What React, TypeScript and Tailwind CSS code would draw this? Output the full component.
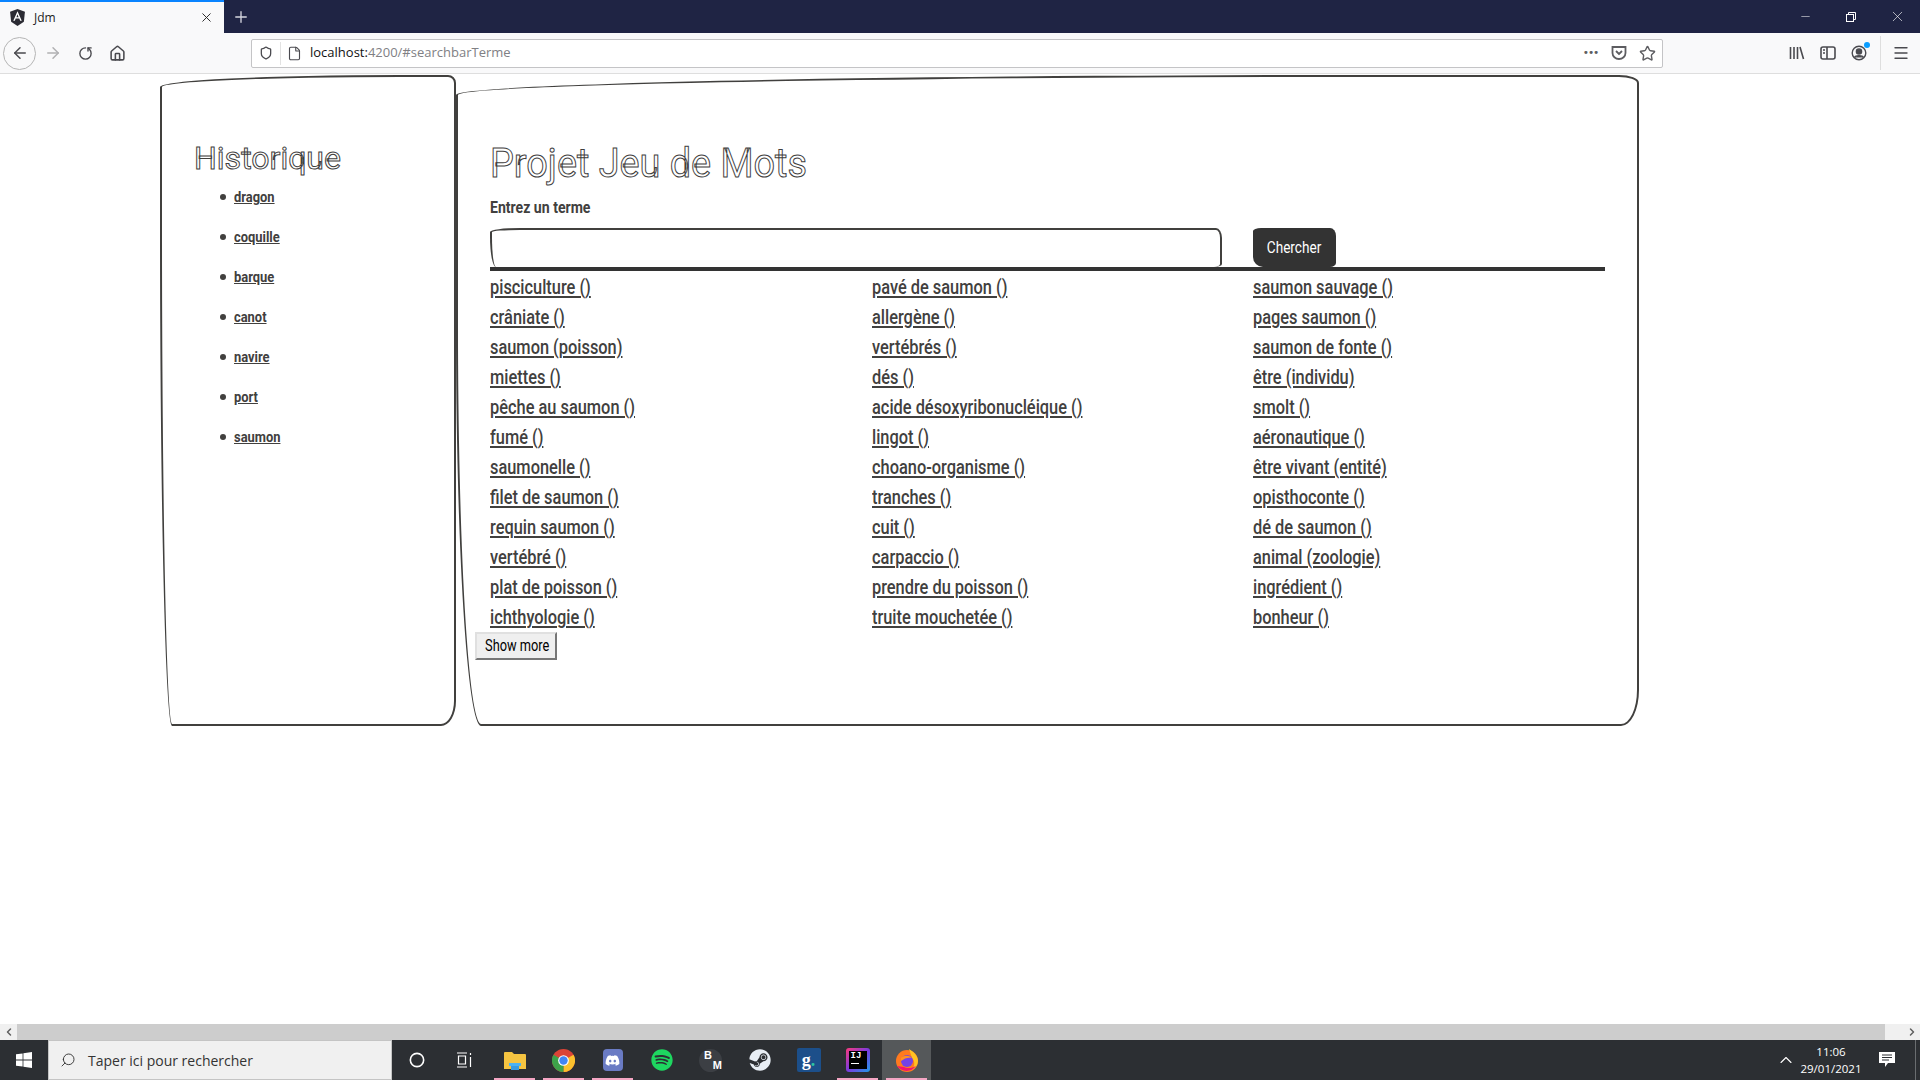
import { ArrowLeft, ArrowRight, RotateCw, Home, Shield, File, Star, X, Plus, Minus, Menu, ChevronUp, ChevronLeft, ChevronRight, Search, Circle } from "lucide-react";
import { FaDiscord, FaSpotify, FaSteam } from "react-icons/fa";

const history = ["dragon", "coquille", "barque", "canot", "navire", "port", "saumon"];

const terms = [
  "pisciculture ()", "pavé de saumon ()", "saumon sauvage ()",
  "crâniate ()", "allergène ()", "pages saumon ()",
  "saumon (poisson)", "vertébrés ()", "saumon de fonte ()",
  "miettes ()", "dés ()", "être (individu)",
  "pêche au saumon ()", "acide désoxyribonucléique ()", "smolt ()",
  "fumé ()", "lingot ()", "aéronautique ()",
  "saumonelle ()", "choano-organisme ()", "être vivant (entité)",
  "filet de saumon ()", "tranches ()", "opisthoconte ()",
  "requin saumon ()", "cuit ()", "dé de saumon ()",
  "vertébré ()", "carpaccio ()", "animal (zoologie)",
  "plat de poisson ()", "prendre du poisson ()", "ingrédient ()",
  "ichthyologie ()", "truite mouchetée ()", "bonheur ()",
];

function AngularIcon() {
  return (
    <svg width="17" height="17" viewBox="0 0 16 16">
      <path d="M8 0 1 2.5l1 9.5L8 16l6-4 1-9.5z" fill="#2b2b33" />
      <path d="M8 2 4 11h1.5l.8-2h3.4l.8 2H12zM7 7.7 8 5l1 2.7z" fill="#fff" />
    </svg>
  );
}

function TitleBar() {
  return (
    <div className="flex h-[33px] items-stretch bg-[#1f2444] text-white">
      <div className="flex w-[224px] items-center border-t-2 border-[#0a84ff] bg-[#f9f9fa] pl-[9px] pr-[10px] text-[#222]">
        <AngularIcon />
        <span className="ml-[8px] font-['Open_Sans',sans-serif] text-[12px]">Jdm</span>
        <X className="ml-auto" size={15} strokeWidth={1.5} />
      </div>
      <div className="flex w-[33px] items-center justify-center">
        <Plus size={18} strokeWidth={1.8} className="text-[#d5d6de]" />
      </div>
      <div className="ml-auto flex items-center">
        <div className="flex w-[46px] justify-center"><Minus size={13} strokeWidth={1} /></div>
        <div className="flex w-[46px] justify-center">
          <svg width="12" height="12" viewBox="0 0 12 12" fill="none" stroke="#fff">
            <rect x="1.5" y="3.5" width="7" height="7" />
            <path d="M3.5 3.5v-2h7v7h-2" />
          </svg>
        </div>
        <div className="flex w-[46px] justify-center"><X size={17} strokeWidth={0.9} /></div>
      </div>
    </div>
  );
}

function Toolbar() {
  return (
    <div className="flex h-[41px] items-center border-b border-[#dedede] bg-[#f9f9fa] text-[#4a4a4f]">
      <div className="ml-[3px] flex h-[33px] w-[33px] items-center justify-center rounded-full border border-[#b5b5b5]">
        <ArrowLeft size={18} strokeWidth={2} />
      </div>
      <ArrowRight size={18} strokeWidth={2} className="ml-[8px] text-[#b1b1b3]" />
      <RotateCw size={15} strokeWidth={2.2} className="ml-[16px] -scale-x-100 rotate-90" />
      <Home size={17} strokeWidth={2.2} className="ml-[16px]" />
      <div className="ml-[125px] flex h-[29px] w-[1412px] items-center rounded-[2px] border border-[#c4c4c6] bg-white">
        <Shield size={14} strokeWidth={2.2} className="ml-[7px]" />
        <div className="ml-[7px] h-[23px] w-px bg-[#e2e2e2]" />
        <File size={15} strokeWidth={1.8} className="ml-[6px]" />
        <span className="ml-[8px] font-['Open_Sans',sans-serif] text-[13px] text-[#808084]"><span className="text-[#111]">localhost:</span>4200/#searchbarTerme</span>
        <div className="ml-auto flex items-center text-[#5d5d61]">
          <span className="text-[13px] font-bold tracking-[0.5px]">•••</span>
          <svg width="16" height="16" viewBox="0 0 16 16" fill="none" stroke="currentColor" strokeWidth="1.8" className="ml-[12px]">
            <path d="M1.5 2h13v6a6.5 6 0 0 1-13 0z" />
            <path d="M5 6l3 3 3-3" />
          </svg>
          <Star size={17} strokeWidth={2} className="ml-[12px] mr-[6px]" />
        </div>
      </div>
      <div className="ml-auto flex items-center">
        <svg width="16" height="16" viewBox="0 0 16 16" fill="none" stroke="currentColor" strokeWidth="1.6" className="mr-[15px]">
          <path d="M1.5 2v12M5 2v12M8.5 2v12M11 2l3.5 12" />
        </svg>
        <svg width="16" height="14" viewBox="0 0 16 14" fill="none" stroke="currentColor" strokeWidth="1.6" className="mr-[15px]">
          <rect x="1" y="1" width="14" height="12" rx="2" />
          <path d="M7 1v12M3 4h2M3 7h2" />
        </svg>
        <div className="relative mr-[13px]">
          <svg width="16" height="16" viewBox="0 0 16 16" fill="none" stroke="currentColor" strokeWidth="1.4">
            <circle cx="8" cy="8" r="6.8" />
            <circle cx="8" cy="6.5" r="2.6" fill="currentColor" />
            <path d="M3.5 12.5c1-2.5 8-2.5 9 0" fill="currentColor" />
          </svg>
          <div className="absolute -right-[3px] -top-[3px] h-[6px] w-[6px] rounded-full bg-[#0a9dff]" />
        </div>
        <div className="h-[34px] w-px bg-[#dedede]" />
        <Menu size={18} strokeWidth={1.8} className="ml-[11px] mr-[10px]" />
      </div>
    </div>
  );
}

function Sidebar() {
  return (
    <aside className="h-[651px] w-[296px] rounded-[240px_8px_15px_12px/12px_8px_25px_500px] border-2 border-[#41403e] pl-[32px] pt-[61px]">
      <h2 className="text-[32px] leading-[40px] text-white [-webkit-text-stroke:1px_#41403e]">Historique</h2>
      <ul className="mt-[7px] pl-[26px]">
        {history.map((h) => (
          <li key={h} className="mb-[16px] flex items-center gap-[8px] text-[15px] font-bold leading-[24px] text-[#41403e]">
            <span className="h-[6px] w-[6px] rounded-full bg-[#41403e]" />
            <a href="#" className="origin-left scale-x-[0.86] underline">{h}</a>
          </li>
        ))}
      </ul>
    </aside>
  );
}

function Main() {
  return (
    <main className="h-[651px] w-[1183px] rounded-[900px_20px_18px_25px/20px_8px_36px_400px] border-2 border-[#41403e] pl-[32px] pt-[63px] text-[#41403e]">
      <h1 className="origin-left scale-x-[0.945] text-[40px] leading-[48px] text-white [-webkit-text-stroke:1px_#41403e]">Projet Jeu de Mots</h1>
      <label className="mt-[8px] block origin-left scale-x-[0.88] text-[16px] font-bold leading-[24px]">Entrez un terme</label>
      <div className="mt-[8px] flex w-[1115px] items-end border-b-4 border-[#333]">
        <input className="h-[39px] w-[732px] rounded-[30px_6px_8px_6px/4px_10px_3px_30px] border-2 border-b-0 border-[#41403e] outline-none" />
        <button className="ml-[31px] h-[39px] w-[83px] rounded-[8px_6px_6px_10px/3px_8px_4px_10px] bg-[#333] text-white">
          <span className="inline-block scale-x-[0.85] text-[16px]">Chercher</span>
        </button>
      </div>
      <div className="mt-px grid w-[1145px] grid-cols-3">
        {terms.map((t) => (
          <div key={t} className="h-[30px]">
            <a href="#" className="inline-block origin-left scale-x-[0.78] whitespace-nowrap text-[21px] font-medium leading-[30px] underline">{t}</a>
          </div>
        ))}
      </div>
      <button className="-ml-[15px] block h-[28px] w-[82px] border-2 border-[#767676] border-l-[#e0e0e0] border-t-[#e0e0e0] bg-[#efefef] text-black">
        <span className="inline-block scale-x-[0.8] whitespace-nowrap text-[16px]">Show more</span>
      </button>
    </main>
  );
}

function ScrollBar() {
  return (
    <div className="flex h-[16px] items-center bg-[#f0f0f0]">
      <div className="flex w-[17px] justify-center"><ChevronLeft size={12} strokeWidth={3} className="text-[#606060]" /></div>
      <div className="h-full flex-1 bg-[#cdcdcd]" />
      <div className="w-[18px]" />
      <div className="flex w-[17px] justify-center"><ChevronRight size={12} strokeWidth={3} className="text-[#606060]" /></div>
    </div>
  );
}

function ChromeIcon() {
  return (
    <svg width="23" height="23" viewBox="0 0 24 24">
      <circle cx="12" cy="12" r="12" fill="#db4437" />
      <path d="M12 12 22.4 6A12 12 0 0 1 12 24z" fill="#fbc02d" />
      <path d="M12 12 12 24A12 12 0 0 1 1.6 6z" fill="#3da34a" />
      <circle cx="12" cy="12" r="5.6" fill="#fff" />
      <circle cx="12" cy="12" r="4.4" fill="#4285f4" />
    </svg>
  );
}

function FirefoxIcon() {
  return (
    <svg width="24" height="24" viewBox="0 0 24 24">
      <circle cx="12" cy="13" r="11" fill="#ff7a1f" />
      <path d="M14 1c5 3 9 7 9 12a11 11 0 0 1-6 9c3-4 3-9 0-12-1-3-2-6-3-9z" fill="#ffc222" />
      <path d="M2 18c4 6 14 7 19 0-3 2-9 3-12 1z" fill="#f5156c" />
      <circle cx="12" cy="13" r="6" fill="#7542e5" />
      <path d="M6 10c3-3 8-3 11 0-4-1-7 0-11 3z" fill="#ff9120" />
    </svg>
  );
}

function TaskIcon({ children, open, active }: { children: React.ReactNode; open?: boolean; active?: boolean }) {
  return (
    <div className={`relative flex h-[40px] w-[49px] items-center justify-center ${active ? "bg-[#55585a]" : ""}`}>
      {children}
      {open && <div className="absolute bottom-0 left-[4px] right-[4px] h-[2px] bg-[#f4a6c4]" />}
    </div>
  );
}

function Taskbar() {
  return (
    <div className="flex h-[40px] items-center bg-[#2c2f33] text-white">
      <div className="flex w-[48px] justify-center">
        <svg width="16" height="16" viewBox="0 0 16 16" fill="#fff">
          <path d="M0 2.3 6.6 1.4v6.2H0zM7.4 1.3 16 0v7.6H7.4zM0 8.4h6.6v6.2L0 13.7zM7.4 8.4H16V16l-8.6-1.3z" />
        </svg>
      </div>
      <div className="flex h-[40px] w-[344px] items-center border border-[#c4c4c4] bg-[#f0f0f0] pl-[11px] text-[#333]">
        <Search size={16} strokeWidth={1.4} className="-scale-x-100" />
        <span className="ml-[12px] font-['Open_Sans',sans-serif] text-[14px]">Taper ici pour rechercher</span>
      </div>
      <div className="flex w-[49px] justify-center"><Circle size={16} strokeWidth={2.4} /></div>
      <div className="flex w-[46px] justify-center">
        <svg width="16" height="16" viewBox="0 0 16 16" fill="none" stroke="#fff" strokeWidth="1.2">
          <path d="M1 1h10M1 15h10M2.5 4h7v8h-7zM14.5 1v2M14.5 5v10" />
        </svg>
      </div>
      <div className="ml-[3px] flex items-center">
        <TaskIcon open>
          <svg width="22" height="19" viewBox="0 0 22 19">
            <path d="M0 2a1 1 0 0 1 1-1h7l2 2h11a1 1 0 0 1 1 1v14H0z" fill="#f5c441" />
            <path d="M7 12h8v7H7z" fill="#3a9be0" />
            <path d="M5 12h12v3H5z" fill="#4db2f2" />
          </svg>
        </TaskIcon>
        <TaskIcon open><ChromeIcon /></TaskIcon>
        <TaskIcon open><div className="flex h-[22px] w-[20px] items-center justify-center rounded-[4px] bg-[#6a7bc4]"><FaDiscord size={15} /></div></TaskIcon>
        <TaskIcon><FaSpotify size={22} className="text-[#1ed760]" /></TaskIcon>
        <TaskIcon>
          <div className="relative h-[23px] w-[23px] rounded-full bg-[#3c3f44] font-['Liberation_Sans',sans-serif] text-[11px] font-bold leading-[11px]">
            <span className="absolute left-[5px] top-[1px]">B</span>
            <span className="absolute bottom-[1px] right-0">M</span>
          </div>
        </TaskIcon>
        <TaskIcon><FaSteam size={22} className="text-[#e8eef5]" /></TaskIcon>
        <TaskIcon>
          <div className="flex h-[24px] w-[24px] items-center justify-center rounded-[2px] bg-[#1c4f8a] font-['Liberation_Serif',serif] text-[18px] font-bold leading-none">g<span className="text-[#2cc5a0]">.</span></div>
        </TaskIcon>
        <TaskIcon open>
          <div className="relative h-[24px] w-[24px] rounded-[3px] bg-[linear-gradient(135deg,#fc3a7b,#7b3ae0,#1c9be8)] p-[3px]">
            <div className="h-full w-full bg-black pl-[2px] font-['Liberation_Mono',monospace] text-[9px] font-bold leading-[10px]">IJ<div className="mt-[2px] h-[1px] w-[8px] bg-white" /></div>
          </div>
        </TaskIcon>
        <TaskIcon open active><FirefoxIcon /></TaskIcon>
      </div>
      <div className="ml-auto flex items-center">
        <ChevronUp size={20} strokeWidth={1.3} />
        <div className="ml-[2px] w-[66px] text-center font-['Open_Sans',sans-serif] text-[11.5px] leading-[17px]">
          <div>11:06</div>
          <div>29/01/2021</div>
        </div>
        <div className="relative ml-[15px] mr-[19px]">
          <svg width="17" height="16" viewBox="0 0 17 16" fill="#fff">
            <path d="M0 0h16v11h-7l-3 4v-4H0z" />
            <path d="M3 3h10M3 5.5h10M3 8h7" stroke="#2c2f33" />
          </svg>
        </div>
        <div className="h-[40px] w-px bg-[#6a6d70]" />
        <div className="w-[4px]" />
      </div>
    </div>
  );
}

export default function App() {
  return (
    <div className="flex h-screen flex-col overflow-hidden bg-white font-['Roboto',sans-serif]">
      <TitleBar />
      <Toolbar />
      <div className="flex flex-1 items-start pl-[160px] pt-px">
        <Sidebar />
        <Main />
      </div>
      <ScrollBar />
      <Taskbar />
    </div>
  );
}
